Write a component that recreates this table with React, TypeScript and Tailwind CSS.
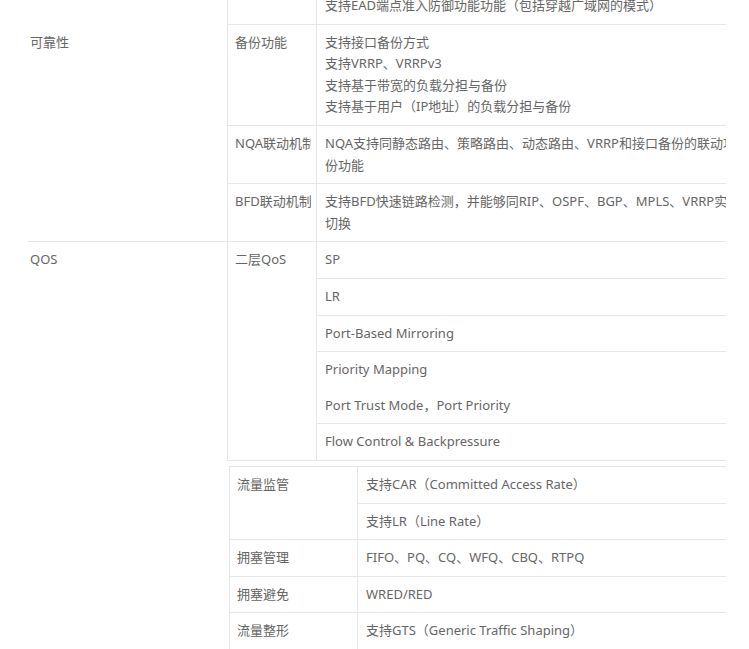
import React from 'react';

const qosRows = [
  { text: 'SP', border: true },
  { text: 'LR', border: true },
  { text: 'Port-Based Mirroring', border: true },
  { text: 'Priority Mapping', border: false },
  { text: 'Port Trust Mode，Port Priority', border: true },
  { text: 'Flow Control & Backpressure', border: false },
];

const lowerRows = [
  { name: '流量监管', items: ['支持CAR（Committed Access Rate）', '支持LR（Line Rate）'] },
  { name: '拥塞管理', items: ['FIFO、PQ、CQ、WFQ、CBQ、RTPQ'] },
  { name: '拥塞避免', items: ['WRED/RED'] },
  { name: '流量整形', items: ['支持GTS（Generic Traffic Shaping）'] },
  { name: '流量标记', items: ['支持基于端口和流的优先级标记'] },
];

function Lines({ lines }: { lines: string[] }) {
  return (
    <>
      {lines.map((l, i) => (
        <div key={i} className="whitespace-nowrap">
          {l}
        </div>
      ))}
    </>
  );
}

function Row({ name, lines, first }: { name?: string; lines: string[]; first?: boolean }) {
  return (
    <div className={'flex border-b border-[#e6e6e6]' + (first ? ' -mt-[12px]' : '')}>
      <div className="w-[89px] shrink-0 border-l border-[#e6e6e6] pl-[7px] py-[7px]">
        {/* long names get cut, like the original fixed-width cell */}
        <div className="w-[76px] overflow-hidden whitespace-nowrap">{name}</div>
      </div>
      <div className="flex-1 border-l border-[#e6e6e6] pl-2 py-[7px]">
        <Lines lines={lines} />
      </div>
    </div>
  );
}

export default function App() {
  return (
    <div className="w-[749px] h-[649px] overflow-hidden bg-white text-[13px] leading-[21.6px] text-[#666] font-['Noto_Sans','Noto_Sans_CJK_SC',sans-serif]">
      <div className="ml-[28px] w-[698px] overflow-hidden">
        <div className="w-[900px]">
          {/* 安全 (top part, scrolled off) */}
          <div className="flex">
            <div className="w-[199px] shrink-0" />
            <div className="flex-1">
              <Row first lines={['支持EAD端点准入防御功能功能（包括穿越广域网的模式）']} />
            </div>
          </div>

          {/* 可靠性 */}
          <div className="flex border-b border-[#e6e6e6]">
            <div className="w-[199px] shrink-0 pl-[2px] py-[7px]">可靠性</div>
            <div className="flex-1 -mb-px">
              <Row
                name="备份功能"
                lines={['支持接口备份方式', '支持VRRP、VRRPv3', '支持基于带宽的负载分担与备份', '支持基于用户（IP地址）的负载分担与备份']}
              />
              <Row
                name="NQA联动机制"
                lines={['NQA支持同静态路由、策略路由、动态路由、VRRP和接口备份的联动功能，实现备', '份功能']}
              />
              <Row
                name="BFD联动机制"
                lines={['支持BFD快速链路检测，并能够同RIP、OSPF、BGP、MPLS、VRRP实现联动，快速', '切换']}
              />
            </div>
          </div>

          {/* QOS */}
          <div className="flex">
            <div className="w-[199px] shrink-0 pl-[2px] py-[7px]">QOS</div>
            <div className="flex-1">
              <div className="flex border-l border-b border-[#e6e6e6]">
                <div className="w-[88px] shrink-0 pl-[7px] py-[7px]">二层QoS</div>
                <div className="flex-1 border-l border-[#e6e6e6]">
                  {qosRows.map((r, i) => (
                    <div key={i} className={'pl-2 py-[7px] whitespace-nowrap' + (r.border ? ' border-b border-[#e6e6e6]' : '')}>
                      {r.text}
                    </div>
                  ))}
                </div>
              </div>

              <div className="mt-[5px] ml-[2px] border-l border-t border-[#e6e6e6]">
                {lowerRows.map((r) => (
                  <div key={r.name} className="flex border-b border-[#e6e6e6]">
                    <div className="w-[127px] shrink-0 pl-[7px] py-[7px]">{r.name}</div>
                    <div className="flex-1 border-l border-[#e6e6e6]">
                      {r.items.map((t, i) => (
                        <div
                          key={i}
                          className={'pl-2 py-[7px] whitespace-nowrap' + (i < r.items.length - 1 ? ' border-b border-[#e6e6e6]' : '')}
                        >
                          {t}
                        </div>
                      ))}
                    </div>
                  </div>
                ))}
              </div>
            </div>
          </div>
        </div>
      </div>
    </div>
  );
}
